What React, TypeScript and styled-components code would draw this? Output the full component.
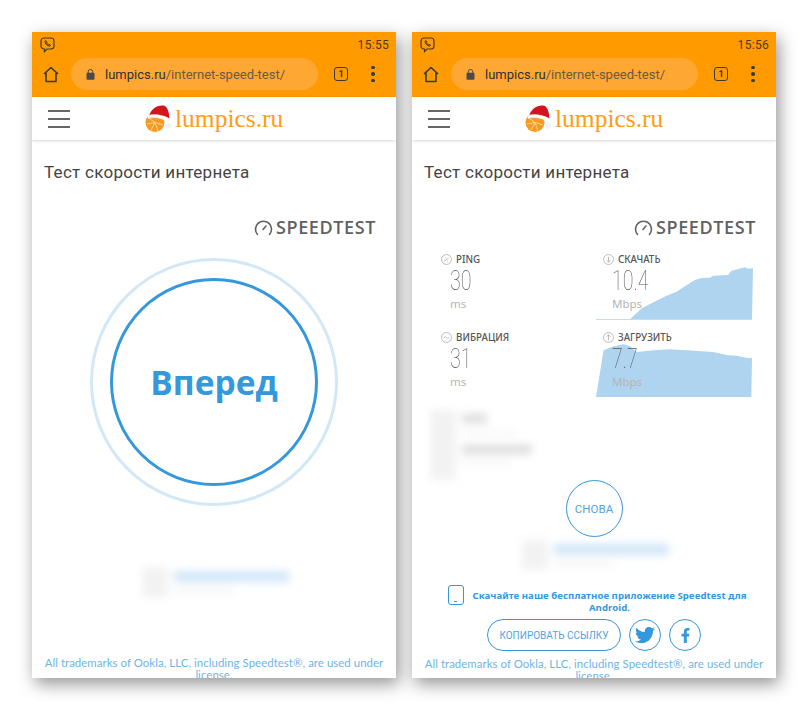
import React from "react"
import styled, { createGlobalStyle } from "styled-components"
import { FaTwitter, FaFacebookF } from "react-icons/fa"

const GlobalStyle = createGlobalStyle`
	html, body {
		margin: 0;
		padding: 0;
		background: #fff;
		font-family: Roboto, "Liberation Sans", sans-serif;
	}
`

const Page = styled.div`
	display: flex;
	gap: 16px;
	width: 808px;
	height: 710px;
	padding: 32px 0 0 32px;
	box-sizing: border-box;
	overflow: hidden;
`

const Phone = styled.div`
	display: flex;
	flex-direction: column;
	width: 364px;
	height: 646px;
	overflow: hidden;
	background: #fff;
	box-shadow: 3px 6px 16px rgba(0, 0, 0, 0.42);
`

const Chrome = styled.div`
	background: #ff9a00;
	height: 65px;
	flex-shrink: 0;
`

const StatusBar = styled.div`
	display: flex;
	align-items: center;
	justify-content: space-between;
	height: 26px;
	padding: 0 7px 0 8px;
	color: #4a3a1c;
	font-size: 12px;
	letter-spacing: 0.3px;
`

const Toolbar = styled.div`
	display: flex;
	align-items: center;
	height: 32px;
	padding: 0 0 0 11px;
`

const UrlPill = styled.div`
	display: flex;
	align-items: center;
	width: 247px;
	height: 32px;
	margin-left: 12px;
	padding-left: 15px;
	box-sizing: border-box;
	border-radius: 16px;
	background: #ffa733;
	font-size: 13px;
	color: #6b5a3c;
`

const Host = styled.span`
	color: #2f3033;
	margin-left: 10px;
`

const TabCount = styled.div`
	display: flex;
	align-items: center;
	justify-content: center;
	width: 12px;
	height: 12px;
	margin-left: 16px;
	border: 1.5px solid #3a3a38;
	border-radius: 3px;
	font-size: 9px;
	font-weight: 700;
	color: #3a3a38;
`

const MenuDots = styled.div`
	display: flex;
	flex-direction: column;
	gap: 3px;
	margin-left: 23px;
`

const Dot = styled.span`
	width: 3.5px;
	height: 3.5px;
	border-radius: 50%;
	background: #3a3a38;
`

const SiteHeader = styled.div`
	position: relative;
	display: flex;
	align-items: center;
	height: 43px;
	flex-shrink: 0;
	padding-left: 16px;
	box-shadow: 0 1px 3px rgba(0, 0, 0, 0.16);
`

const Burger = styled.div`
	display: flex;
	flex-direction: column;
	gap: 6px;
	width: 22px;
`

const BurgerLine = styled.span`
	height: 2px;
	background: #666;
`

const Brand = styled.div`
	display: flex;
	align-items: center;
	gap: 4px;
	margin-left: 75px;
	font-family: "Liberation Serif", serif;
	font-size: 25.5px;
	color: #ff9d14;
`

const Body = styled.div`
	display: flex;
	flex-direction: column;
	flex: 1;
	min-height: 0;
	overflow: hidden;
`

const Title = styled.div`
	margin: 22px 0 0 12px;
	height: 20px;
	line-height: 20px;
	font-size: 17px;
	letter-spacing: 0.27px;
	color: #444;
`

const SpeedtestLogo = styled.div`
	display: flex;
	align-items: center;
	justify-content: flex-end;
	gap: 3px;
	height: 20px;
	margin: 35px 20px 0 0;
	font-family: "Open Sans", sans-serif;
	font-size: 18px;
	font-weight: 600;
	letter-spacing: 0.6px;
	color: #5f6163;
`

const GoRing = styled.div`
	display: flex;
	align-items: center;
	justify-content: center;
	align-self: center;
	flex-shrink: 0;
	width: 248px;
	height: 248px;
	margin-top: 21px;
	box-sizing: border-box;
	border: 3px solid #d3e8f7;
	border-radius: 50%;
`

const GoButton = styled.div`
	display: flex;
	align-items: center;
	justify-content: center;
	width: 208px;
	height: 208px;
	box-sizing: border-box;
	border: 3px solid #3498db;
	border-radius: 50%;
	font-family: "Open Sans", sans-serif;
	font-size: 33.5px;
	font-weight: 700;
	color: #3498db;
`

const BlurRow = styled.div<{ $top: number; $left: number; $height: number }>`
	display: flex;
	gap: 6px;
	height: ${(p) => p.$height}px;
	margin: ${(p) => p.$top}px 0 0 ${(p) => p.$left}px;
	filter: blur(4px);
	flex-shrink: 0;
`

const BlurIcon = styled.div`
	width: 26px;
	height: 100%;
	background: #f2f2f2;
`

const BlurLines = styled.div`
	display: flex;
	flex-direction: column;
	padding-top: 4px;
`

const BlurBar = styled.div<{ $width: number; $color: string; $height: number; $gap: number }>`
	width: ${(p) => p.$width}px;
	height: ${(p) => p.$height}px;
	margin-bottom: ${(p) => p.$gap}px;
	background: ${(p) => p.$color};
`

const Trademark = styled.div<{ $top: number }>`
	margin: ${(p) => p.$top}px 8px 0;
	font-family: Lato, sans-serif;
	font-size: 11.4px;
	line-height: 12px;
	letter-spacing: 0.06px;
	text-align: center;
	color: #6db5ea;
	flex-shrink: 0;
`

const StatsGrid = styled.div`
	display: grid;
	grid-template-columns: 155px 157px;
	grid-auto-rows: 78px;
	margin: 13px 0 0 29px;
	flex-shrink: 0;
`

const Stat = styled.div<{ $inset?: boolean }>`
	position: relative;
	padding-left: ${(p) => (p.$inset ? 7 : 0)}px;
`

const StatLabel = styled.div`
	position: relative;
	z-index: 1;
	display: flex;
	align-items: center;
	gap: 4px;
	height: 18px;
	font-family: "Noto Sans", sans-serif;
	font-size: 9.8px;
	font-weight: 500;
	color: #555;
`

const StatValue = styled.div`
	position: relative;
	z-index: 1;
	height: 26px;
	margin-left: 9px;
	line-height: 26px;
	font-size: 28px;
	font-weight: 100;
	color: #555;
	transform: scaleX(0.7);
	transform-origin: left center;
`

const StatUnit = styled.div`
	position: relative;
	z-index: 1;
	height: 20px;
	margin-left: 9px;
	line-height: 20px;
	font-family: "Noto Sans", sans-serif;
	font-size: 11.5px;
	color: #b5b5b5;
`

const Chart = styled.svg<{ $top: number }>`
	position: absolute;
	left: 0;
	top: ${(p) => p.$top}px;
	width: 157px;
	height: 54px;
`

const AgainButton = styled.div`
	display: flex;
	align-items: center;
	justify-content: center;
	align-self: center;
	width: 57px;
	height: 57px;
	box-sizing: border-box;
	flex-shrink: 0;
	border: 1.5px solid #3498db;
	border-radius: 50%;
	font-size: 11.5px;
	color: #4ea5e2;
`

const Promo = styled.div`
	display: flex;
	align-items: flex-start;
	margin: 20px 28px 0 36px;
	flex-shrink: 0;
	font-family: "Noto Sans", sans-serif;
	font-size: 9.6px;
	line-height: 12px;
	font-weight: 700;
	letter-spacing: 0.06px;
	text-align: center;
	color: #3498db;
`

const PromoPhone = styled.div`
	position: relative;
	flex-shrink: 0;
	width: 16px;
	height: 20px;
	margin: -5px 7px 0 0;
	box-sizing: border-box;
	border: 1.5px solid #3498db;
	border-radius: 3px;
	&::after {
		content: "";
		position: absolute;
		left: 5px;
		bottom: 2px;
		width: 3px;
		height: 1.5px;
		background: #3498db;
	}
`

const ShareRow = styled.div`
	display: flex;
	align-items: center;
	gap: 8px;
	height: 32px;
	margin: 5px 0 0 75px;
	flex-shrink: 0;
`

const CopyButton = styled.div`
	display: flex;
	align-items: center;
	justify-content: center;
	width: 134px;
	height: 32px;
	box-sizing: border-box;
	border: 1.5px solid #3498db;
	border-radius: 16px;
	font-size: 10px;
	color: #4ea5e2;
`

const ShareCircle = styled.div`
	display: flex;
	align-items: center;
	justify-content: center;
	width: 32px;
	height: 32px;
	box-sizing: border-box;
	border: 1.5px solid #3498db;
	border-radius: 50%;
	color: #3498db;
`

const ViberIcon = () => (
	<svg width="15" height="16" viewBox="0 0 15 16" fill="none" stroke="#4a3a1c" strokeWidth="1.2">
		<path d="M4 1h7a3 3 0 0 1 3 3v5a3 3 0 0 1-3 3H7l-2.500 2.600V12H4a3 3 0 0 1-3-3V4a3 3 0 0 1 3-3z" />
		<path d="M5 4.200l1-.6 1 1.600-.6.7c.3.8 1 1.500 1.900 1.900l.7-.6 1.500 1-.6 1c-2.700-.2-5-2.400-4.900-5z" strokeWidth="1" />
	</svg>
)

const HomeIcon = () => (
	<svg width="16" height="17" viewBox="0 0 16 17" fill="none" stroke="#3a3a38" strokeWidth="1.6" strokeLinejoin="round">
		<path d="M1 8l7-6.500L15 8M3 6.500V15.500h10V6.500" />
	</svg>
)

const LockIcon = () => (
	<svg width="9" height="11" viewBox="0 0 9 11" fill="#4c4a48">
		<rect x="0.500" y="3.800" width="8" height="7" rx="1" />
		<path d="M2.200 4V2.800a2.300 2.300 0 0 1 4.600 0V4" fill="none" stroke="#4c4a48" strokeWidth="1" />
	</svg>
)

const OrangeLogo = () => (
	<svg width="26" height="28" viewBox="0 0 26 28">
		<circle cx="10" cy="17.500" r="9.500" fill="#f59a23" />
		<path d="M10 17.500L4 13M10 17.500L2 19M10 17.500L6 25M10 17.500L13 26M10 17.500L18 20" stroke="#ffd28a" strokeWidth="1" />
		<path d="M4 11C6 4 12 0 18 .5c4 .5 6 5 6.500 13-5-3.500-12-4.500-20.500-2.500z" fill="#d4141c" />
		<path d="M3 10.500c7-2 15-.5 20.500 3.500l-1 3c-5-4-13-5.500-19.500-3.500z" fill="#fff" stroke="#eee" strokeWidth="0.5" />
		<circle cx="23" cy="21" r="2.800" fill="#f1f1f1" />
	</svg>
)

const GaugeIcon = () => (
	<svg width="19" height="17" viewBox="0 0 19 17" fill="none" stroke="#5f6163" strokeWidth="1.6" strokeLinecap="round">
		<path d="M3.500 15.500a8 8 0 1 1 12 0" />
		<path d="M9 10.500l3-3.500" />
	</svg>
)

const StatIcon = ({ kind }: { kind: "ping" | "down" | "jitter" | "up" }) => (
	<svg width="11" height="11" viewBox="0 0 10 10" fill="none" stroke="#aaa" strokeWidth="0.7">
		<circle cx="5" cy="5" r="4.500" />
		{kind === "ping" && <path d="M3 6.500l4-3M3.500 3.500h1M5.500 6.500h1" />}
		{kind === "down" && <path d="M5 2.500v5M3.200 5.700L5 7.500l1.800-1.800" />}
		{kind === "up" && <path d="M5 7.500v-5M3.200 4.300L5 2.500l1.800 1.800" />}
		{kind === "jitter" && <path d="M2.500 5.500C3.500 4 4.500 4 5 5s1.500 1 2.500-.5" />}
	</svg>
)

const BrowserTop = ({ time }: { time: string }) => (
	<>
		<Chrome>
			<StatusBar>
				<ViberIcon />
				<span>{time}</span>
			</StatusBar>
			<Toolbar>
				<HomeIcon />
				<UrlPill>
					<LockIcon />
					<Host>lumpics.ru</Host>/internet-speed-test/
				</UrlPill>
				<TabCount>1</TabCount>
				<MenuDots>
					<Dot />
					<Dot />
					<Dot />
				</MenuDots>
			</Toolbar>
		</Chrome>
		<SiteHeader>
			<Burger>
				<BurgerLine />
				<BurgerLine />
				<BurgerLine />
			</Burger>
			<Brand>
				<OrangeLogo />
				lumpics.ru
			</Brand>
		</SiteHeader>
		<Title>Тест скорости интернета</Title>
		<SpeedtestLogo>
			<GaugeIcon />
			SPEEDTEST
		</SpeedtestLogo>
	</>
)

const BlurredResult = ({ top, left }: { top: number; left: number }) => (
	<BlurRow $top={top} $left={left} $height={30}>
		<BlurIcon />
		<BlurLines>
			<BlurBar $width={115} $color="#d0e6f8" $height={11} $gap={7} />
			<BlurBar $width={60} $color="#f4f4f4" $height={5} $gap={0} />
		</BlurLines>
	</BlurRow>
)

const StartScreen = () => (
	<Phone>
		<BrowserTop time="15:55" />
		<Body>
			<GoRing>
				<GoButton>Вперед</GoButton>
			</GoRing>
			<BlurredResult top={61} left={110} />
			<Trademark $top={60}>All trademarks of Ookla, LLC, including Speedtest®, are used under license.</Trademark>
		</Body>
	</Phone>
)

const ResultScreen = () => (
	<Phone>
		<BrowserTop time="15:56" />
		<Body>
			<StatsGrid>
				<Stat>
					<StatLabel>
						<StatIcon kind="ping" />
						PING
					</StatLabel>
					<StatValue>30</StatValue>
					<StatUnit>ms</StatUnit>
				</Stat>
				<Stat $inset>
					<Chart $top={16} viewBox="527 168 473 162" preserveAspectRatio="none">
						<path
							d="M527 327L630 327L665 295L700 277L740 257L770 245L790 232L825 210L845 204L870 203L880 197L925 195L935 182L975 172L985 176L1000 175L997 329L527 329Z"
							fill="#aed4f0"
						/>
					</Chart>
					<StatLabel>
						<StatIcon kind="down" />
						СКАЧАТЬ
					</StatLabel>
					<StatValue>10.4</StatValue>
					<StatUnit>Mbps</StatUnit>
				</Stat>
				<Stat>
					<StatLabel>
						<StatIcon kind="jitter" />
						ВИБРАЦИЯ
					</StatLabel>
					<StatValue>31</StatValue>
					<StatUnit>ms</StatUnit>
				</Stat>
				<Stat $inset>
					<Chart $top={15} viewBox="527 398 473 162" preserveAspectRatio="none">
						<path
							d="M527 560L550 420L580 408L610 402L630 408L650 425L700 420L750 417L800 420L880 425L925 435L950 436L985 443L997 442L995 560Z"
							fill="#aed4f0"
						/>
					</Chart>
					<StatLabel>
						<StatIcon kind="up" />
						ЗАГРУЗИТЬ
					</StatLabel>
					<StatValue>7.7</StatValue>
					<StatUnit>Mbps</StatUnit>
				</Stat>
			</StatsGrid>
			<BlurRow $top={4} $left={18} $height={70}>
				<BlurIcon />
				<BlurLines>
					<BlurBar $width={25} $color="#dcdcdc" $height={9} $gap={8} />
					<BlurBar $width={55} $color="#f4f4f4" $height={4} $gap={10} />
					<BlurBar $width={70} $color="#dcdcdc" $height={9} $gap={7} />
					<BlurBar $width={50} $color="#f4f4f4" $height={4} $gap={0} />
				</BlurLines>
			</BlurRow>
			<AgainButton>СНОВА</AgainButton>
			<BlurredResult top={3} left={110} />
			<Promo>
				<PromoPhone />
				<span>Скачайте наше бесплатное приложение Speedtest для Android.</span>
			</Promo>
			<ShareRow>
				<CopyButton>КОПИРОВАТЬ ССЫЛКУ</CopyButton>
				<ShareCircle>
					<FaTwitter size={20} />
				</ShareCircle>
				<ShareCircle>
					<FaFacebookF size={15} />
				</ShareCircle>
			</ShareRow>
			<Trademark $top={7}>All trademarks of Ookla, LLC, including Speedtest®, are used under license.</Trademark>
		</Body>
	</Phone>
)

export default function App() {
	return (
		<Page>
			<GlobalStyle />
			<StartScreen />
			<ResultScreen />
		</Page>
	)
}
